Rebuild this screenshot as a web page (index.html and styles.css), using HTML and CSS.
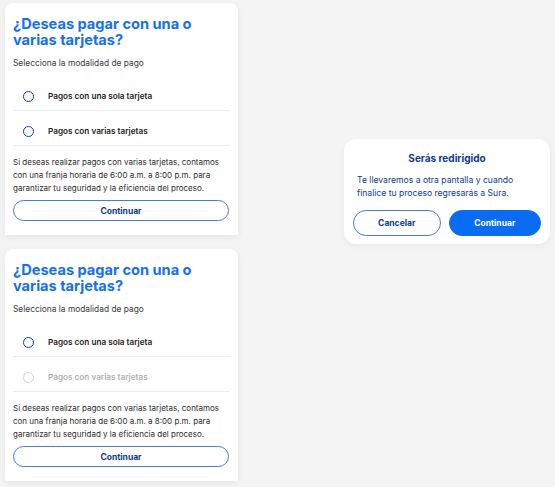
FILE: index.html
```html
<!DOCTYPE html>
<html lang="es">
<head>
<meta charset="utf-8">
<link rel="stylesheet" href="styles.css">
</head>
<body>
<div class="page">
  <div class="column">
    <section class="card">
      <h1 class="title">¿Deseas pagar con una o varias tarjetas?</h1>
      <p class="subtitle">Selecciona la modalidad de pago</p>
      <div class="options">
        <div class="option"><span class="radio"></span><span class="label">Pagos con una sola tarjeta</span></div>
        <div class="option"><span class="radio"></span><span class="label">Pagos con varias tarjetas</span></div>
      </div>
      <p class="info">Si deseas realizar pagos con varias tarjetas, contamos con una franja horaria de 6:00 a.m. a 8:00 p.m. para garantizar tu seguridad y la eficiencia del proceso.</p>
      <button class="btn-outline wide">Continuar</button>
    </section>
    <section class="card">
      <h1 class="title">¿Deseas pagar con una o varias tarjetas?</h1>
      <p class="subtitle">Selecciona la modalidad de pago</p>
      <div class="options">
        <div class="option"><span class="radio"></span><span class="label">Pagos con una sola tarjeta</span></div>
        <div class="option disabled"><span class="radio"></span><span class="label">Pagos con varias tarjetas</span></div>
      </div>
      <p class="info">Si deseas realizar pagos con varias tarjetas, contamos con una franja horaria de 6:00 a.m. a 8:00 p.m. para garantizar tu seguridad y la eficiencia del proceso.</p>
      <button class="btn-outline wide">Continuar</button>
    </section>
  </div>
  <aside class="dialog">
    <h2 class="dialog-title">Serás redirigido</h2>
    <p class="dialog-text">Te llevaremos a otra pantalla y cuando finalice tu proceso regresarás a Sura.</p>
    <div class="dialog-actions">
      <button class="btn-outline dlg">Cancelar</button>
      <button class="btn-fill dlg">Continuar</button>
    </div>
  </aside>
</div>
</body>
</html>
```
FILE: styles.css
```css
* { box-sizing: border-box; }
html, body { margin: 0; padding: 0; }
body {
  background: #f4f4f4;
  font-family: Inter, "Noto Sans", sans-serif;
  width: 555px;
  height: 487px;
  overflow: hidden;
}
.page {
  display: flex;
  align-items: flex-start;
}
.column {
  display: flex;
  flex-direction: column;
  gap: 14px;
  padding: 3px 0 0 5px;
}
.card {
  width: 233px;
  height: 232px;
  background: #fff;
  border-radius: 8px 8px 0 0;
  box-shadow: 0 2px 6px rgba(0,0,0,0.07);
  padding: 13px 8px 0 8px;
  display: flex;
  flex-direction: column;
}
.title {
  margin: 0;
  max-width: 195px;
  font-size: 14.6px;
  line-height: 16px;
  font-weight: 700;
  color: #1570ef;
  letter-spacing: 0;
}
.subtitle {
  margin: 9px 0 0 0;
  font-size: 8.4px;
  line-height: 12px;
  color: #3a3a3a;
}
.options {
  margin-top: 7px;
}
.option {
  display: flex;
  align-items: center;
  height: 35px;
  padding: 6px 0 0 10px;
  border-bottom: 1px solid #e9edf2;
}
.radio {
  width: 11px;
  height: 11px;
  border-radius: 50%;
  border: 1.6px solid #0d3f95;
  flex: none;
}
.label {
  margin-left: 14px;
  font-size: 8.2px;
  font-weight: 600;
  color: #222;
}
.option.disabled .radio { border-color: #cfd2d6; }
.option.disabled .label { color: #b0b0b0; }
.info {
  margin: 10px 0 0 0;
  font-size: 8px;
  line-height: 13px;
  color: #2b2b2b;
}
.btn-outline, .btn-fill {
  font-family: inherit;
  font-weight: 700;
  font-size: 8.5px;
  border-radius: 999px;
  cursor: pointer;
}
.btn-outline {
  background: #fff;
  border: 1px solid #4a7bd3;
  color: #0b3b8f;
}
.btn-fill {
  background: #0a6cf2;
  border: 1px solid #0a6cf2;
  color: #fff;
}
.wide {
  margin-top: 5px;
  width: 216px;
  height: 21px;
}
.dialog {
  margin: 139px 0 0 106px;
  width: 206px;
  height: 105px;
  background: #fff;
  border-radius: 12px;
  box-shadow: 0 2px 6px rgba(0,0,0,0.05);
  padding: 13px 9px 0 9px;
}
.dialog-title {
  margin: 0;
  text-align: center;
  font-size: 10px;
  line-height: 13px;
  font-weight: 700;
  color: #0b3b8f;
}
.dialog-text {
  margin: 9px 0 0 4px;
  max-width: 170px;
  font-size: 8.6px;
  line-height: 13px;
  color: #0b3b8f;
}
.dialog-actions {
  display: flex;
  gap: 8px;
  margin-top: 10px;
}
.dlg {
  height: 26px;
  font-size: 8.5px;
}
.btn-outline.dlg { width: 88px; }
.btn-fill.dlg { width: 93px; }
```
